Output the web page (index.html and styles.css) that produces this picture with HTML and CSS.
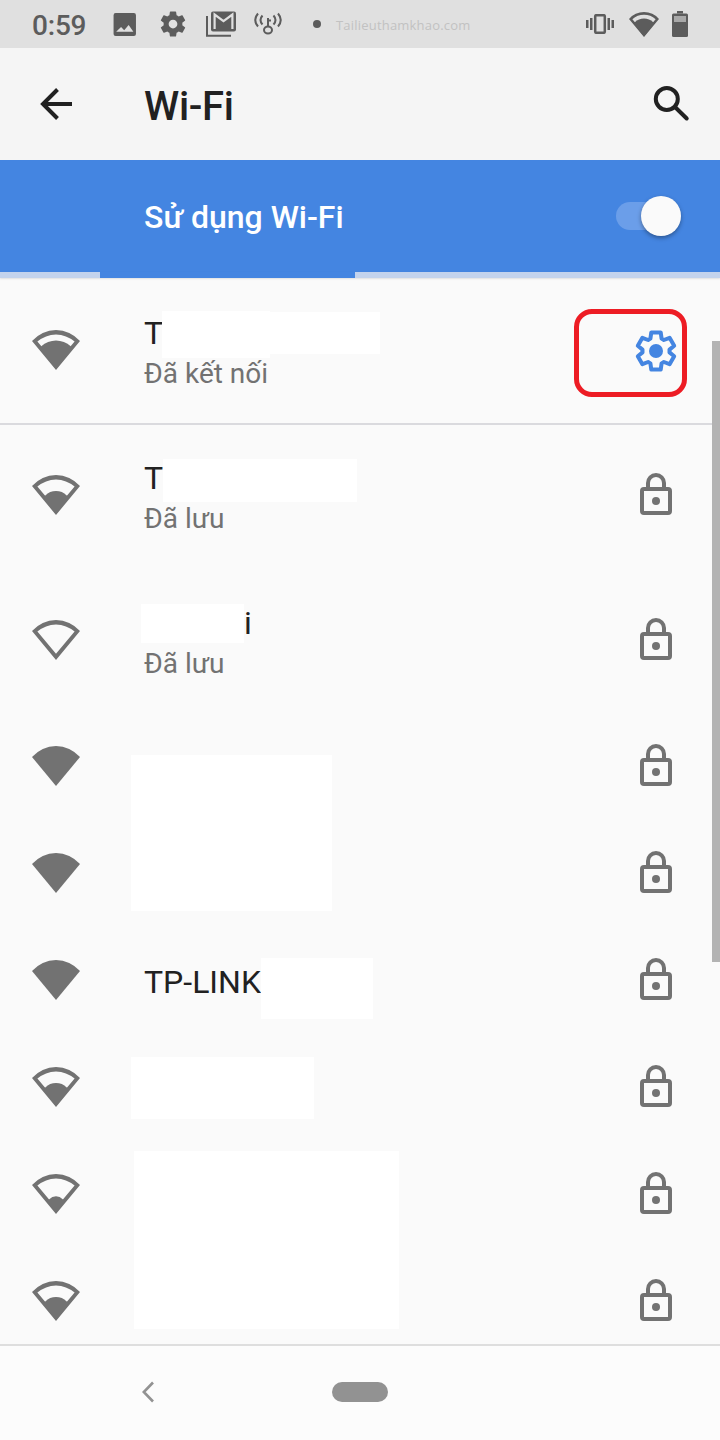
FILE: index.html
```
<!DOCTYPE html>
<html lang="vi">

<head>
    <meta charset="UTF-8">
    <meta name="viewport" content="width=device-width, initial-scale=1.0">
    <title>Wi-Fi</title>
    <link rel="stylesheet" href="styles.css">
</head>

<body>
    <!-- Shared icons -->
    <svg class="sprite" width="0" height="0">
        <symbol id="wifi-outline" viewBox="0 0 48 48">
            <path fill-rule="evenodd" d="M24 44L0 15A31.7 31.7 0 0 1 48 15ZM24 37.7L42.6 15.5A28.5 28.5 0 0 0 5.4 15.5Z"/>
        </symbol>
        <symbol id="wifi-0" viewBox="0 0 48 48">
            <use href="#wifi-outline"/>
        </symbol>
        <symbol id="wifi-1" viewBox="0 0 48 48">
            <use href="#wifi-outline"/>
            <path d="M24 43L15.5 31L17.3 29.2A9 9 0 0 1 30.7 29.2L32.5 31Z"/>
        </symbol>
        <symbol id="wifi-2" viewBox="0 0 48 48">
            <use href="#wifi-outline"/>
            <path d="M24 43L11.5 27L13.3 24.6A15 15 0 0 1 34.7 24.6L36.5 27Z"/>
        </symbol>
        <symbol id="wifi-3" viewBox="0 0 48 48">
            <use href="#wifi-outline"/>
            <path d="M24 43L7.5 22L9.3 20.2A21.5 21.5 0 0 1 38.7 20.2L40.5 22Z"/>
        </symbol>
        <symbol id="wifi-4" viewBox="0 0 48 48">
            <path d="M24 44L0 15A31.7 31.7 0 0 1 48 15Z"/>
        </symbol>
        <symbol id="lock" viewBox="0 0 24 24">
            <rect x="5" y="9" width="14" height="12" rx="1" fill="none" stroke="currentColor" stroke-width="2"/>
            <path d="M8 9V6a4 4 0 0 1 8 0v3" fill="none" stroke="currentColor" stroke-width="2"/>
            <circle cx="12" cy="15" r="2"/>
        </symbol>
    </svg>

    <div class="screen">
        <div class="status-bar">
            <span class="clock">0:59</span>
            <svg class="st-image" viewBox="0 0 24 24"><path fill-rule="evenodd" d="M3.500 1H21a2 2 0 0 1 2 2V21a2 2 0 0 1-2 2H3.500a2 2 0 0 1-2-2V3a2 2 0 0 1 2-2zM4 19H20.500L16 12.500l-4.300 5-3-3z"/></svg>
            <svg class="st-gear" viewBox="0 0 24 24"><path d="M19.43 12.98c.04-.32.07-.64.07-.98s-.03-.66-.07-.98l2.11-1.65c.19-.15.24-.42.12-.64l-2-3.46c-.12-.22-.39-.3-.61-.22l-2.49 1c-.52-.4-1.08-.73-1.69-.98l-.38-2.65C14.46 2.18 14.25 2 14 2h-4c-.25 0-.46.18-.49.42l-.38 2.65c-.61.25-1.17.59-1.69.98l-2.49-1c-.23-.09-.49 0-.61.22l-2 3.46c-.13.22-.07.49.12.64l2.11 1.65c-.04.32-.07.65-.07.98s.03.66.07.98l-2.11 1.65c-.19.15-.24.42-.12.64l2 3.46c.12.22.39.3.61.22l2.49-1c.52.4 1.08.73 1.69.98l.38 2.65c.03.24.24.42.49.42h4c.25 0 .46-.18.49-.42l.38-2.65c.61-.25 1.17-.59 1.69-.98l2.49 1c.23.09.49 0 .61-.22l2-3.46c.12-.22.07-.49-.12-.64l-2.11-1.65zM12 15.5c-1.93 0-3.5-1.57-3.5-3.5s1.57-3.5 3.5-3.5 3.5 1.57 3.5 3.5-1.57 3.5-3.5 3.5z"/></svg>
            <svg class="st-mail" viewBox="0 0 30 26">
                <path d="M1 5V24.800H25" fill="none" stroke="currentColor" stroke-width="2"/>
                <rect x="5" y="0.500" width="25" height="20" rx="2"/>
                <path class="envelope" d="M8.600 18V3.500L17.500 10.200L26.400 3.500V18"/>
            </svg>
            <svg class="st-cast" viewBox="0 0 28 24" fill="none" stroke="currentColor" stroke-width="2">
                <path d="M4 1.500Q-1.500 8 4 14.500M8.500 3.500Q4.500 8 8.500 12.500M24 1.500Q29.500 8 24 14.500M19.500 3.500Q23.500 8 19.500 12.500"/>
                <ellipse cx="14" cy="18" rx="4" ry="3.500"/>
                <path d="M14 15V6M14 8.500h3"/>
            </svg>
            <span class="dot"></span>
            <span class="site">Tailieuthamkhao.com</span>
            <svg class="st-vibrate" viewBox="0 0 28 20">
                <path d="M0 6h2.500v8H0zM4 4h2.500v12H4zM21.500 4H24v12h-2.500zM25.500 6h2.500v8h-2.500z"/>
                <rect x="9.200" y="1.200" width="9.600" height="17.600" rx="1" fill="none" stroke="currentColor" stroke-width="2.500"/>
            </svg>
            <svg class="st-wifi" viewBox="0 4 48 40"><use href="#wifi-3" width="48" height="48"/></svg>
            <svg class="st-battery" viewBox="0 0 16 26">
                <path d="M5 0h6v2.500H5z"/>
                <rect y="2.500" width="16" height="23.500" rx="1.500"/>
                <path d="M2 5h12v6H2z" fill="#a8a8a8"/>
            </svg>
        </div>

        <div class="app-bar">
            <svg class="icon" viewBox="0 0 48 48" fill="none" stroke="currentColor" stroke-width="4">
                <path d="M25.500 9.500L11 24L25.500 38.500M11 24H40"/>
            </svg>
            <h1>Wi-Fi</h1>
            <svg class="icon" viewBox="0 0 48 48" fill="none" stroke="currentColor" stroke-width="4">
                <circle cx="18.800" cy="19" r="11"/>
                <path d="M27 27L38.700 38.500" stroke-linecap="round"/>
            </svg>
        </div>

        <div class="switch-bar">
            <span>Sử dụng Wi-Fi</span>
            <div class="switch"><div class="thumb"></div></div>
        </div>
        <div class="progress"><div class="progress-fill"></div></div>

        <div class="network-list">
            <div class="network saved connected">
                <svg class="icon"><use href="#wifi-3"/></svg>
                <div class="info">
                    <div class="ssid">T</div>
                    <div class="summary">Đã kết nối</div>
                </div>
                <svg class="icon gear" viewBox="-24 -25 48 48">
                    <path d="M-5.600-12.400L-4.700-18.600H4.700L5.600-12.400L7.900-11L13.600-13.200L18.200-5.200L13.500-1.400V1.400L18.200 5.200L13.600 13.200L7.900 11L5.600 12.400L4.700 18.600H-4.700L-5.600 12.400L-7.900 11L-13.600 13.200L-18.200 5.200L-13.500 1.400V-1.400L-18.200-5.200L-13.600-13.200L-7.900-11Z" fill="none" stroke="currentColor" stroke-width="4" stroke-linejoin="round"/>
                    <circle r="7"/>
                </svg>
            </div>
            <div class="network saved">
                <svg class="icon"><use href="#wifi-2"/></svg>
                <div class="info">
                    <div class="ssid">T</div>
                    <div class="summary">Đã lưu</div>
                </div>
                <svg class="icon"><use href="#lock"/></svg>
            </div>
            <div class="network saved">
                <svg class="icon"><use href="#wifi-0"/></svg>
                <div class="info">
                    <div class="ssid tail">i</div>
                    <div class="summary">Đã lưu</div>
                </div>
                <svg class="icon"><use href="#lock"/></svg>
            </div>
            <div class="network">
                <svg class="icon"><use href="#wifi-4"/></svg>
                <div class="info"></div>
                <svg class="icon"><use href="#lock"/></svg>
            </div>
            <div class="network">
                <svg class="icon"><use href="#wifi-4"/></svg>
                <div class="info"></div>
                <svg class="icon"><use href="#lock"/></svg>
            </div>
            <div class="network">
                <svg class="icon"><use href="#wifi-4"/></svg>
                <div class="info">
                    <div class="ssid">TP-LINK</div>
                </div>
                <svg class="icon"><use href="#lock"/></svg>
            </div>
            <div class="network">
                <svg class="icon"><use href="#wifi-2"/></svg>
                <div class="info"></div>
                <svg class="icon"><use href="#lock"/></svg>
            </div>
            <div class="network">
                <svg class="icon"><use href="#wifi-1"/></svg>
                <div class="info"></div>
                <svg class="icon"><use href="#lock"/></svg>
            </div>
            <div class="network">
                <svg class="icon"><use href="#wifi-2"/></svg>
                <div class="info"></div>
                <svg class="icon"><use href="#lock"/></svg>
            </div>
        </div>

        <div class="nav-bar">
            <svg class="nav-back" viewBox="0 0 12 22"><path d="M11 1.500L1.800 11L11 20.500" fill="none" stroke="currentColor" stroke-width="2.600"/></svg>
            <div class="nav-home"></div>
        </div>

        <!-- Blanked out network names -->
        <div class="cover cover-1"></div>
        <div class="cover cover-2"></div>
        <div class="cover cover-3"></div>
        <div class="cover cover-4"></div>
        <div class="cover cover-5"></div>
        <div class="cover cover-6"></div>
        <div class="cover cover-7"></div>
        <div class="cover cover-8"></div>

        <div class="highlight"></div>
        <div class="scrollbar"></div>
    </div>
</body>

</html>
```

FILE: styles.css
```
body {
    margin: 0;
    font-family: Roboto, "Noto Sans", sans-serif;
    color: #212121;
}

.sprite {
    position: absolute;
}

svg {
    display: block;
    flex: none;
    fill: currentColor;
}

svg[fill="none"] {
    fill: none;
}

.screen {
    position: relative;
    display: flex;
    flex-direction: column;
    width: 720px;
    height: 1440px;
    background-color: #fafafa;
    overflow: hidden;
}

.icon {
    width: 48px;
    height: 48px;
}

/* Status bar */
.status-bar {
    display: flex;
    align-items: center;
    height: 48px;
    flex: none;
    padding: 0 32px;
    box-sizing: border-box;
    background-color: #e0e0e0;
    color: #5c5c5c;
}

.clock {
    width: 80px;
    font-size: 28px;
    font-weight: 500;
    line-height: 32px;
    letter-spacing: -0.2px;
    padding-top: 3px;
    box-sizing: border-box;
}

.st-image {
    width: 25px;
    height: 25px;
}

.st-gear {
    width: 30px;
    height: 30px;
    margin-left: 21px;
}

.st-mail {
    width: 30px;
    height: 26px;
    margin-left: 18px;
}

.envelope {
    fill: none;
    stroke: #e0e0e0;
    stroke-width: 2.2;
}

.st-cast {
    width: 28px;
    height: 24px;
    margin-left: 18px;
}

.dot {
    width: 8px;
    height: 8px;
    margin-left: 31px;
    border-radius: 50%;
    background-color: #5c5c5c;
}

.site {
    flex: 1;
    margin-left: 15px;
    padding-top: 2px;
    font-family: "Open Sans", sans-serif;
    font-size: 13px;
    letter-spacing: 0.2px;
    color: #c2c2c2;
}

.st-vibrate {
    width: 28px;
    height: 20px;
}

.st-wifi {
    width: 30px;
    height: 25px;
    margin-left: 15px;
}

.st-battery {
    width: 16px;
    height: 26px;
    margin-left: 13px;
}

/* App bar */
.app-bar {
    display: flex;
    align-items: center;
    flex: none;
    height: 112px;
    padding: 0 24px 0 32px;
    box-sizing: border-box;
    background-color: #f5f5f5;
}

.app-bar h1 {
    flex: 1;
    margin: 0 0 0 64px;
    padding-top: 6px;
    font-size: 40px;
    font-weight: 500;
    line-height: 48px;
    letter-spacing: -0.3px;
}

/* Main switch */
.switch-bar {
    display: flex;
    align-items: center;
    justify-content: space-between;
    flex: none;
    height: 112px;
    padding: 0 39px 0 144px;
    box-sizing: border-box;
    background-color: #4485e1;
    color: #fff;
    font-size: 32px;
    font-weight: 500;
    line-height: 40px;
}

.switch-bar span {
    padding-top: 2px;
}

.switch {
    display: flex;
    align-items: center;
    justify-content: flex-end;
    width: 65px;
    height: 28px;
    border-radius: 14px;
    background-color: #6b9ee9;
}

.thumb {
    width: 40px;
    height: 40px;
    flex: none;
    border-radius: 50%;
    background-color: #fafafa;
    box-shadow: 0 2px 4px rgba(0, 0, 0, 0.35);
}

.progress {
    flex: none;
    height: 6px;
    background-color: #c3d3ed;
    box-shadow: 0 1px 2px rgba(0, 0, 0, 0.1);
}

.progress-fill {
    width: 254.5px;
    height: 6px;
    margin-left: 100px;
    background-color: #4485e1;
}

/* Networks */
.network-list {
    flex: 1;
    min-height: 0;
    overflow: hidden;
}

.network {
    display: flex;
    height: 107px;
    padding: 29px 40px 0 32px;
    box-sizing: border-box;
    color: #727272;
}

.network.saved {
    height: 145px;
    padding-top: 48px;
}

.network.connected {
    box-shadow: 0 2px 0 #dadade;
}

.info {
    flex: 1;
    margin-left: 64px;
    padding-top: 6px;
}

.saved .info {
    margin-top: -19px;
}

.ssid {
    font-size: 32px;
    line-height: 40px;
    color: #212121;
}

.ssid.tail {
    padding-left: 100px;
}

.summary {
    margin-top: 1px;
    font-size: 28px;
    line-height: 40px;
}

.gear {
    color: #4485e1;
}

/* Navigation bar */
.nav-bar {
    display: flex;
    align-items: center;
    flex: none;
    height: 96px;
    padding-left: 141px;
    box-sizing: border-box;
    border-top: 2px solid #dedede;
    background-color: #fcfcfc;
    color: #929292;
}

.nav-back {
    width: 12px;
    height: 22px;
    margin-top: -2px;
    margin-left: 1px;
}

.nav-home {
    width: 56px;
    height: 20px;
    margin: -2px 0 0 178px;
    border-radius: 10px;
    background-color: #929292;
}

/* Overlays */
.cover {
    position: absolute;
    background-color: #fff;
}

.cover-1 {
    left: 162px;
    top: 311px;
    width: 108px;
    height: 47px;
}

.cover-2 {
    left: 270px;
    top: 312px;
    width: 110px;
    height: 42px;
}

.cover-3 {
    left: 163px;
    top: 459px;
    width: 194px;
    height: 43px;
}

.cover-4 {
    left: 141px;
    top: 604px;
    width: 103px;
    height: 39px;
}

.cover-5 {
    left: 131px;
    top: 755px;
    width: 201px;
    height: 156px;
}

.cover-6 {
    left: 261px;
    top: 958px;
    width: 112px;
    height: 61px;
}

.cover-7 {
    left: 131px;
    top: 1057px;
    width: 183px;
    height: 62px;
}

.cover-8 {
    left: 134px;
    top: 1151px;
    width: 265px;
    height: 178px;
}

.highlight {
    position: absolute;
    left: 574px;
    top: 309px;
    width: 113px;
    height: 88px;
    box-sizing: border-box;
    border: 5px solid #ed1c24;
    border-radius: 18px;
}

.scrollbar {
    position: absolute;
    right: 0;
    top: 341px;
    width: 8px;
    height: 621px;
    background-color: #b3b3b3;
}
```
